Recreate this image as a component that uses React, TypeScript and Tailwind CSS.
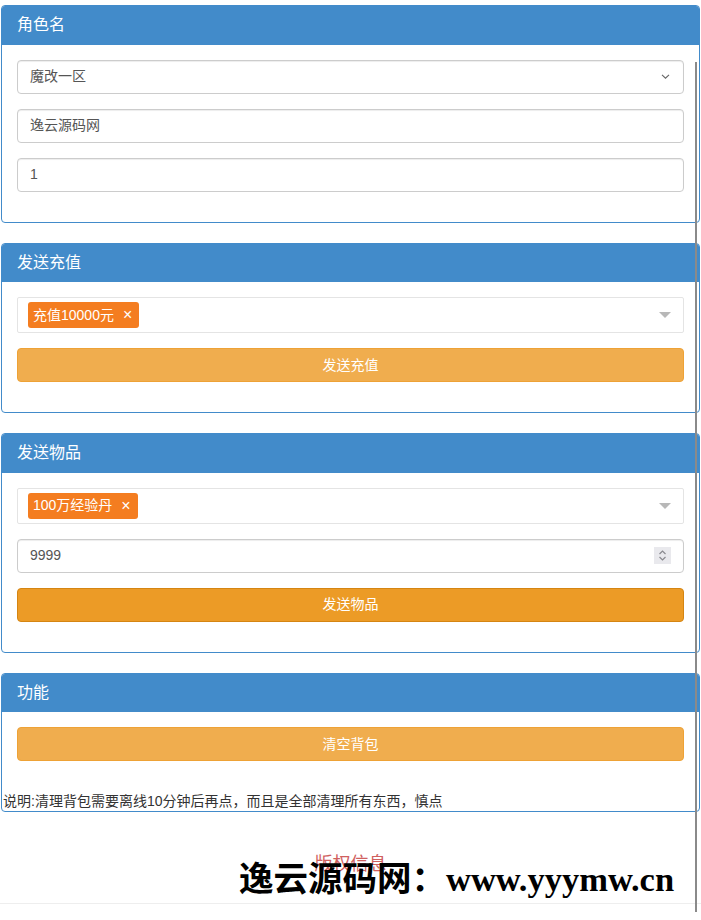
import React from 'react'

const font = { fontFamily: '"Liberation Sans", "Noto Sans CJK SC", sans-serif' }

function Panel({ title, children }: { title: string; children: React.ReactNode }) {
  return (
    <div className="mb-5 rounded-[4px] border border-[#428bca] bg-white">
      <div className="rounded-t-[3px] border-b border-[#428bca] bg-[#428bca] px-[15px] py-[10px] text-[16px] leading-[1.1] text-white">
        {title}
      </div>
      {children}
    </div>
  )
}

function TagSelect({ tag }: { tag: string }) {
  return (
    <div className="mb-[15px] flex h-[36px] items-center rounded-[2px] border border-[#e4e4e4] bg-white pl-[10px] pr-[12px]">
      <span className="flex h-[26px] items-center rounded-[3px] bg-[#f47d20] pl-[5px] pr-[7px] text-[14px] text-white">
        {tag}
        <span className="ml-[9px] text-[16px] leading-none">×</span>
      </span>
      <span className="ml-auto h-0 w-0 border-x-[6px] border-t-[6px] border-x-transparent border-t-[#b8b8b8]" />
    </div>
  )
}

function Btn({ label, dark }: { label: string; dark?: boolean }) {
  return (
    <button
      className={
        dark
          ? 'mb-[15px] block h-[34px] w-full rounded-[4px] border border-[#d58512] bg-[#ec9b26] text-[14px] text-white'
          : 'mb-[15px] block h-[34px] w-full rounded-[4px] border border-[#eea236] bg-[#f0ad4e] text-[14px] text-white'
      }
    >
      {label}
    </button>
  )
}

function Field({ value, children }: { value: string; children?: React.ReactNode }) {
  return (
    <div className="mb-[15px] flex h-[34px] items-center rounded-[4px] border border-[#ccc] bg-white pl-[12px] pr-[12px] text-[14px] text-[#555] shadow-[inset_0_1px_1px_rgba(0,0,0,0.075)]">
      <span>{value}</span>
      {children}
    </div>
  )
}

export default function App() {
  return (
    <div className="relative min-h-[920px] bg-white text-[#333]" style={font}>
      <div className="px-[1px] pt-[5px]">
        <Panel title="角色名">
          <div className="p-[15px]">
            <Field value="魔改一区">
              <svg className="ml-auto mr-[1px]" width="9" height="5" viewBox="0 0 9 5">
                <path d="M1 0.8l3.5 3.4 3.5-3.4" fill="none" stroke="#666" strokeWidth="1.1" />
              </svg>
            </Field>
            <Field value="逸云源码网" />
            <Field value="1" />
          </div>
        </Panel>

        <Panel title="发送充值">
          <div className="p-[15px]">
            <TagSelect tag="充值10000元" />
            <Btn label="发送充值" />
          </div>
        </Panel>

        <Panel title="发送物品">
          <div className="p-[15px]">
            <TagSelect tag="100万经验丹" />
            <Field value="9999">
              <span className="ml-auto flex h-[17px] w-[17px] flex-col items-center justify-center bg-[#e9e9ed]">
                <svg width="9" height="13" viewBox="0 0 9 13">
                  <path d="M1.5 5l3-3 3 3M1.5 8l3 3 3-3" fill="none" stroke="#8a8a8f" strokeWidth="1.2" />
                </svg>
              </span>
            </Field>
            <Btn label="发送物品" dark />
          </div>
        </Panel>

        <Panel title="功能">
          <div className="p-[15px]">
            <Btn label="清空背包" />
          </div>
          <div className="pl-[1px] text-[14px] leading-[20px] text-[#333]">
            说明:清理背包需要离线10分钟后再点，而且是全部清理所有东西，慎点
          </div>
        </Panel>
      </div>

      <div className="border-b border-[#eee] pb-[26px] pt-[19px] text-center text-[18px] leading-[26px] text-[#d0605e]">
        版权信息
      </div>

      <div
        className="absolute left-[239px] top-[855px] whitespace-nowrap text-[34.5px] font-bold leading-[48px] text-black"
        style={{ fontFamily: '"Liberation Serif", "Noto Sans CJK SC", serif' }}
      >
        逸云源码网：www.yyymw.cn
      </div>

      <div className="absolute left-[695px] top-[62px] h-[850px] w-[2px] bg-[#8a8a8a]" />
    </div>
  )
}
